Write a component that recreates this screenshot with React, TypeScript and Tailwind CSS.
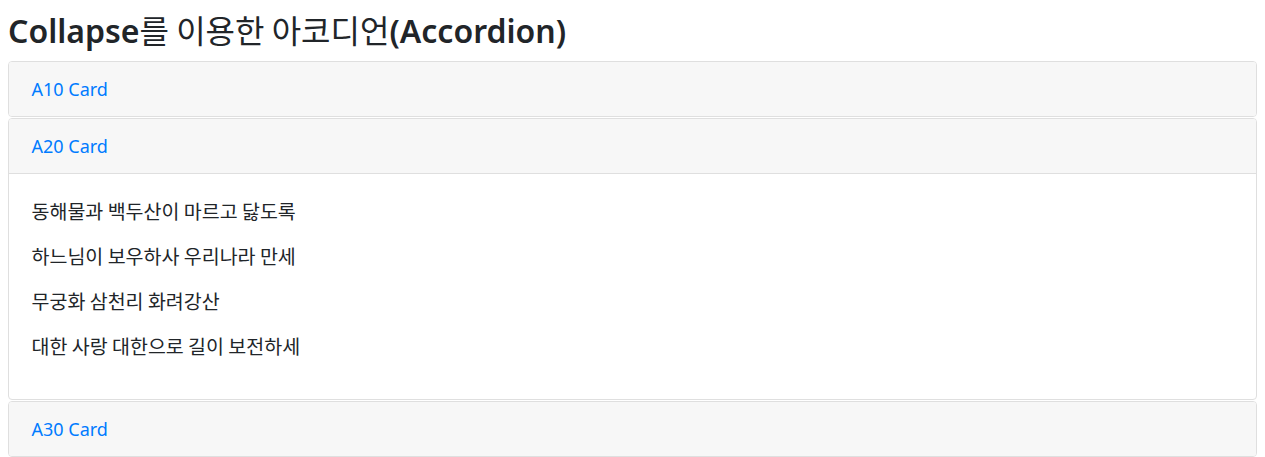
import { useState } from "react";

const cards = [
  { id: "a10", title: "A10 Card" },
  { id: "a20", title: "A20 Card" },
  { id: "a30", title: "A30 Card" },
];

const lines = [
  "동해물과 백두산이 마르고 닳도록",
  "하느님이 보우하사 우리나라 만세",
  "무궁화 삼천리 화려강산",
  "대한 사랑 대한으로 길이 보전하세",
];

export default function App() {
  const [open, setOpen] = useState("a20");

  return (
    <div className="p-2 bg-white text-[#212529] text-[18px] leading-[27px] font-['Noto_Sans','Noto_Sans_CJK_KR',sans-serif]">
      {/* Title */}
      <h2 className="text-[32px] leading-[43px] mb-[9px] font-semibold">
        Collapse
        <span className="font-normal font-['Noto_Sans_CJK_KR',sans-serif]">를 이용한 아코디언</span>
        (Accordion)
      </h2>

      {/* Accordion */}
      <div className="flex flex-col gap-px">
        {cards.map((card) => (
          <div key={card.id} className="border border-[#dfdfdf] rounded-[4px] overflow-hidden bg-white">
            <div
              className={`bg-[#f7f7f7] px-[22.5px] py-[13.5px] ${
                open === card.id ? "border-b border-[#dfdfdf]" : ""
              }`}
            >
              <button
                type="button"
                onClick={() => setOpen(open === card.id ? "" : card.id)}
                className="text-[#007bff] text-[18px] leading-[27px]"
              >
                {card.title}
              </button>
            </div>
            {open === card.id && (
              <div className="p-[22.5px] text-[19.5px] font-['Noto_Sans_CJK_KR',sans-serif]">
                {lines.map((line) => (
                  <p key={line} className="mb-[18px] leading-[27px]">
                    {line}
                  </p>
                ))}
              </div>
            )}
          </div>
        ))}
      </div>
    </div>
  );
}
